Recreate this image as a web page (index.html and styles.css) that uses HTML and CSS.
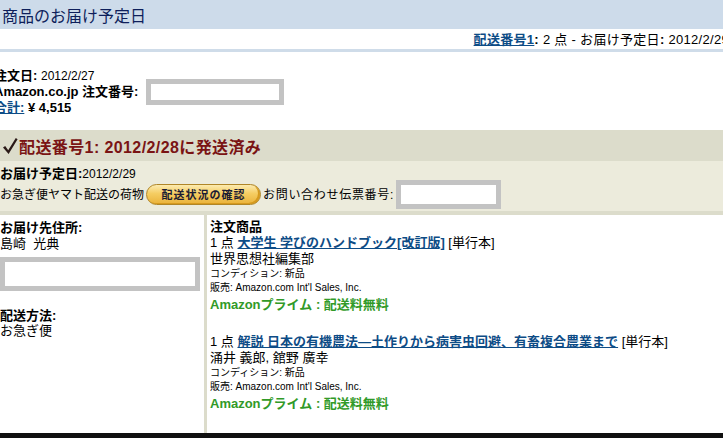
FILE: index.html
```html
<!DOCTYPE html>
<html lang="ja">
<head>
<meta charset="utf-8">
<title>商品のお届け予定日</title>
<link rel="stylesheet" href="styles.css">
</head>
<body>
<div class="page-header">商品のお届け予定日</div>
<div class="shipment-summary"><a href="#" class="link strong">配送番号1</a><b>:</b> 2 点 - お届け予定日<b>:</b> 2012/2/29</div>
<div class="rule"></div>

<div class="order-info">
  <div><b class="label">注文日:</b> <span class="small-val">2012/2/27</span></div>
  <div><b class="label">Amazon.co.jp 注文番号:</b><span class="redact redact-order"></span></div>
  <div><a href="#" class="link strong">合計:</a> <b class="label">¥ 4,515</b></div>
</div>

<div class="shipment-head">
  <svg class="check" width="16" height="18" viewBox="0 0 16 18"><path d="M1 10.5 L3.2 9 L6.2 13.2 L13.8 1 L15.6 2.2 L6.6 17 Z" fill="#2b1a18"/></svg>
  <span class="ship-title">配送番号1: 2012/2/28に発送済み</span>
</div>

<div class="delivery">
  <div class="delivery-date"><b class="label12">お届け予定日:</b>2012/2/29</div>
  <div class="delivery-row">
    <span>お急ぎ便ヤマト配送の荷物</span>
    <a href="#" class="track-btn">配送状況の確認</a>
    <span class="slip-label">お問い合わせ伝票番号:</span><span class="redact redact-slip"></span>
  </div>
</div>

<div class="columns">
  <div class="col-left">
    <div class="heading">お届け先住所:</div>
    <div class="name">島崎&nbsp;&nbsp;光典</div>
    <div class="redact redact-address"></div>
    <div class="heading method">配送方法:</div>
    <div class="plain">お急ぎ便</div>
  </div>
  <div class="col-right">
    <div class="heading">注文商品</div>
    <div class="item">
      <div class="line">1 点 <a href="#" class="link strong">大学生 学びのハンドブック[改訂版]</a> [単行本]</div>
      <div class="line">世界思想社編集部</div>
      <div class="tiny">コンディション: 新品</div>
      <div class="tiny">販売: Amazon.com Int'l Sales, Inc.</div>
      <div class="prime">Amazonプライム : 配送料無料</div>
    </div>
    <div class="item second">
      <div class="line">1 点 <a href="#" class="link strong">解説 日本の有機農法―土作りから病害虫回避、有畜複合農業まで</a> [単行本]</div>
      <div class="line">涌井 義郎, 舘野 廣幸</div>
      <div class="tiny">コンディション: 新品</div>
      <div class="tiny">販売: Amazon.com Int'l Sales, Inc.</div>
      <div class="prime">Amazonプライム : 配送料無料</div>
    </div>
  </div>
</div>
<div class="taskbar"></div>
</body>
</html>
```

FILE: styles.css
```css
html, body {
  margin: 0;
  padding: 0;
}
body {
  width: 723px;
  height: 438px;
  overflow: hidden;
  display: flex;
  flex-direction: column;
  font-family: "Liberation Sans", "Noto Sans CJK JP", sans-serif;
  font-size: 13px;
  color: #000;
  background: #fff;
}
.link {
  color: #0d4c86;
  text-decoration: underline;
}
.strong { font-weight: bold; }

.page-header {
  height: 29px;
  flex: none;
  display: flex;
  align-items: center;
  padding-left: 2px;
  background: #cddbea;
  color: #0e1f5b;
  font-size: 16px;
}
.shipment-summary {
  height: 20px;
  flex: none;
  line-height: 22px;
  margin-right: -6px;
  text-align: right;
  white-space: nowrap;
  font-size: 13px;
  letter-spacing: 0.3px;
}
.rule {
  height: 3px;
  flex: none;
  background: #cfdce9;
}

.order-info {
  flex: none;
  margin: 16px 0 0 -6px;
  line-height: 16px;
  font-size: 13px;
}
.order-info .small-val { font-size: 12px; }
.redact {
  box-sizing: border-box;
  border: 5px solid #c3c3c3;
  background: #fff;
}
.redact-order {
  display: inline-block;
  width: 138px;
  height: 26px;
  vertical-align: top;
  margin: -5px 0 -5px 8px;
}

.shipment-head {
  flex: none;
  margin-top: 14px;
  height: 31px;
  display: flex;
  align-items: center;
  gap: 1px;
  padding-left: 2px;
  background: #dcdccb;
  color: #7a1414;
  font-size: 16px;
  font-weight: bold;
}
.ship-title { letter-spacing: 0.4px; }
.check { flex: none; margin-top: 1px; }

.delivery {
  flex: none;
  background: #ecebdc;
  padding: 5px 0 2px 0;
  border-bottom: 4px solid #dcdccb;
  font-size: 12px;
  line-height: 16px;
}
.label12 { font-size: 13px; }
.delivery-row {
  display: flex;
  align-items: center;
  height: 29px;
  margin-top: -2px;
  white-space: nowrap;
}
.track-btn {
  box-sizing: border-box;
  width: 115px;
  height: 21px;
  margin: 0 2px 0 2px;
  display: flex;
  align-items: center;
  justify-content: center;
  border: 1px solid #b08628;
  border-radius: 11px;
  background: linear-gradient(#fcebb0, #f5cd62 45%, #eab23a);
  box-shadow: inset -2px -1px 0 #d69a1e;
  color: #1b1b33;
  font-size: 11px;
  font-weight: bold;
  letter-spacing: 1px;
  text-decoration: none;
}
.slip-label { letter-spacing: 0.7px; }
.redact-slip {
  display: block;
  width: 105px;
  height: 29px;
  margin-left: 2px;
}

.columns {
  flex: 1;
  display: flex;
  min-height: 0;
}
.col-left {
  width: 204px;
  flex: none;
  border-right: 3px solid #dcdccb;
  padding-top: 5px;
  line-height: 16px;
}
.heading {
  font-weight: bold;
  font-size: 13px;
  line-height: 16px;
}
.name { font-size: 13px; line-height: 16px; }
.redact-address {
  width: 200px;
  height: 34px;
  margin-top: 5px;
}
.heading.method { margin-top: 17px; }
.plain { font-size: 13px; line-height: 14px; }

.col-right {
  flex: 1;
  padding: 4px 0 0 3px;
  white-space: nowrap;
  overflow: hidden;
}
.line {
  font-size: 13px;
  line-height: 16px;
}
.tiny {
  font-size: 10px;
  line-height: 14px;
}
.prime {
  margin-top: 2px;
  font-size: 13px;
  line-height: 16px;
  font-weight: bold;
  color: #319a28;
}
.item.second { margin-top: 21px; }

.taskbar {
  height: 5px;
  flex: none;
  background: #101010;
}
```
